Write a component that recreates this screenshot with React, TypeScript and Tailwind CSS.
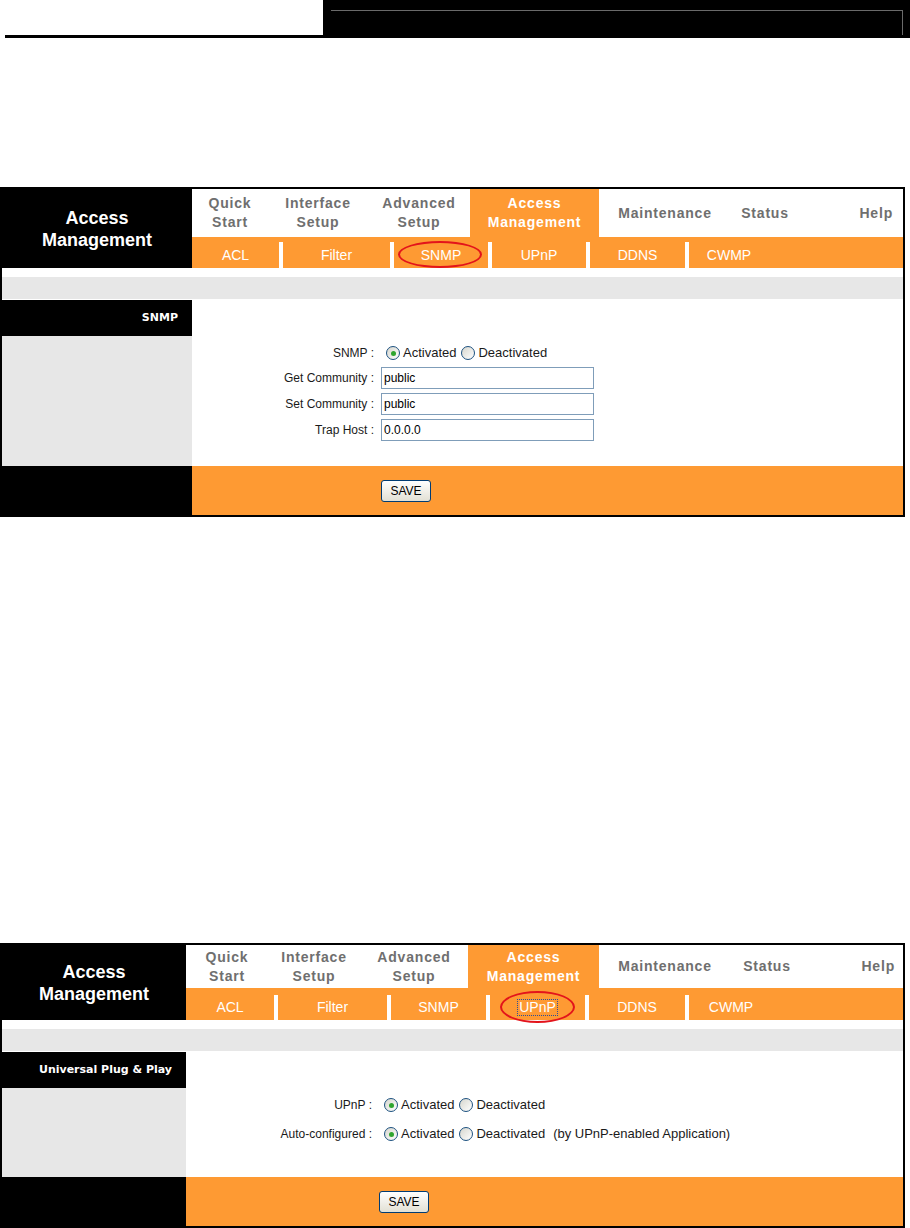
import type { ReactNode } from 'react'

interface NavCell {
  top: string
  bottom?: string
  w: string
  active?: boolean
}

interface SubCell {
  label: string
  w: string
  ring?: string
  focus?: boolean
}

interface PanelProps {
  leftW: string
  cols: string
  navH: string
  subH: string
  sepH: string
  bodyH: string
  helpPr: string
  title: string
  nav: NavCell[]
  sub: SubCell[]
  saveRow: string
  children: ReactNode
}

function Radio({ checked }: { checked?: boolean }) {
  return (
    <span className="ml-[5px] mr-[3px] inline-flex h-[14px] w-[14px] items-center justify-center rounded-full border border-[#1c5180] bg-linear-to-br from-[#d6d6ce] to-white">
      {checked && <span className="h-[5px] w-[5px] rounded-full bg-[#2fa52f]" />}
    </span>
  )
}

function SaveButton() {
  return (
    <button
      type="button"
      className="h-[22px] w-[50px] rounded-[3px] border border-[#003c74] bg-linear-to-b from-white to-[#e2e0d4] text-[12px] leading-none text-black"
    >
      SAVE
    </button>
  )
}

function Field({ value }: { value: string }) {
  return (
    <input
      readOnly
      value={value}
      className="h-[22px] w-[213px] border border-[#7f9db9] bg-white px-[2px] text-[12px] text-black outline-none"
    />
  )
}

function Panel(p: PanelProps) {
  return (
    <div className="w-[905px] border-2 border-black font-['Liberation_Sans',Arial,sans-serif]">
      {/* top: title + menus */}
      <div className="flex">
        <div className={`${p.leftW} flex items-center justify-center bg-black text-center text-[18px] font-bold leading-[22px] text-white`}>
          Access
          <br />
          Management
        </div>
        <div className="flex flex-1 flex-col">
          <div className={`flex ${p.navH}`}>
            {p.nav.map((n) => (
              <div
                key={n.top}
                className={`${n.w} flex items-center justify-center text-center text-[14px] font-bold leading-[19px] tracking-[0.8px] ${
                  n.active ? 'bg-[#fe9a33] text-white' : 'text-[#6f6f6f]'
                }`}
              >
                <span>
                  {n.top}
                  {n.bottom && <br />}
                  {n.bottom}
                </span>
              </div>
            ))}
            <div className={`flex flex-1 items-center justify-end ${p.helpPr} text-[14px] font-bold tracking-[0.8px] text-[#6f6f6f]`}>
              Help
            </div>
          </div>
          <div className={`flex items-end bg-[#fe9a33] ${p.subH}`}>
            {p.sub.map((s, i) => (
              <div key={s.label} className="flex items-end">
                {i > 0 && <div className={`w-[4px] ${p.sepH} bg-white`} />}
                <div className={`relative flex ${s.w} ${p.sepH} items-center justify-center text-[14px] text-white`}>
                  <span className={s.focus ? 'border border-dotted border-[#2d4f9a] px-px leading-[15px]' : ''}>
                    {s.label}
                  </span>
                  {s.ring && (
                    <span className={`pointer-events-none absolute rounded-[50%] border-2 border-[#e3141b] ${s.ring}`} />
                  )}
                </div>
              </div>
            ))}
          </div>
        </div>
      </div>

      <div className="h-[9px] bg-white" />
      <div className="h-[22px] bg-[#e7e7e7]" />

      {/* body */}
      <div className={`grid ${p.cols} border-t border-white`}>
        <div className={`flex flex-col ${p.bodyH}`}>
          <div className="flex h-[36px] items-center justify-end bg-black pr-[14px] font-['DejaVu_Sans',Verdana,sans-serif] text-[11px] font-bold text-white">
            {p.title}
          </div>
          <div className="flex-1 bg-[#e7e7e7]" />
        </div>
        <div className="flex flex-col bg-white pt-[42px] text-[12px] text-[#1a1a1a]">{p.children}</div>
      </div>

      <div className={`grid ${p.cols} h-[49px]`}>
        <div className="bg-black" />
        <div className={`flex items-center bg-[#fe9a33] ${p.saveRow}`}>
          <SaveButton />
        </div>
      </div>
    </div>
  )
}

function Row({ label, w, children }: { label: string; w: string; children: ReactNode }) {
  return (
    <div className="flex h-[22px] items-center">
      <div className={`${w} shrink-0 pr-[7px] text-right`}>{label} :</div>
      <div className="flex items-center whitespace-nowrap text-[13px]">{children}</div>
    </div>
  )
}

const nav1: NavCell[] = [
  { top: 'Quick', bottom: 'Start', w: 'w-[76px]' },
  { top: 'Interface', bottom: 'Setup', w: 'w-[100px]' },
  { top: 'Advanced', bottom: 'Setup', w: 'w-[102px]' },
  { top: 'Access', bottom: 'Management', w: 'w-[129px]', active: true },
  { top: 'Maintenance', w: 'w-[132px]' },
  { top: 'Status', w: 'w-[68px]' },
]

const nav2: NavCell[] = [
  { top: 'Quick', bottom: 'Start', w: 'w-[82px]' },
  { top: 'Interface', bottom: 'Setup', w: 'w-[92px]' },
  { top: 'Advanced', bottom: 'Setup', w: 'w-[108px]' },
  { top: 'Access', bottom: 'Management', w: 'w-[131px]', active: true },
  { top: 'Maintenance', w: 'w-[132px]' },
  { top: 'Status', w: 'w-[72px]' },
]

const sub1: SubCell[] = [
  { label: 'ACL', w: 'w-[87px]' },
  { label: 'Filter', w: 'w-[107px]' },
  { label: 'SNMP', w: 'w-[94px]', ring: 'left-[4px] top-[-1px] h-[27px] w-[84px]' },
  { label: 'UPnP', w: 'w-[94px]' },
  { label: 'DDNS', w: 'w-[95px]' },
  { label: 'CWMP', w: 'w-[80px]' },
]

const sub2: SubCell[] = [
  { label: 'ACL', w: 'w-[88px]' },
  { label: 'Filter', w: 'w-[109px]' },
  { label: 'SNMP', w: 'w-[95px]' },
  { label: 'UPnP', w: 'w-[95px]', ring: 'left-[10px] top-[-4px] h-[32px] w-[75px]', focus: true },
  { label: 'DDNS', w: 'w-[96px]' },
  { label: 'CWMP', w: 'w-[84px]' },
]

export default function App() {
  return (
    <div className="h-[1228px] w-[910px] overflow-hidden bg-white">
      {/* page header strip */}
      <div className="flex h-[38px]">
        <div className="w-[323px] pl-[5px]">
          <div className="h-[38px] border-b-[3px] border-black" />
        </div>
        <div className="flex-1 bg-black pl-[8px] pr-[7px] pt-[10px]">
          <div className="h-[25px] border-r border-t border-[#6a6a6a]" />
        </div>
      </div>

      <div className="mt-[149px]">
        <Panel
          leftW="w-[190px]"
          cols="grid-cols-[190px_1fr]"
          navH="h-[48px]"
          subH="h-[31px]"
          sepH="h-[26px]"
          bodyH="h-[166px]"
          helpPr="pr-[10px]"
          title="SNMP"
          nav={nav1}
          sub={sub1}
          saveRow="pl-[189px]"
        >
          <Row label="SNMP" w="w-[189px]">
            <Radio checked />
            Activated
            <Radio />
            Deactivated
          </Row>
          <div className="mt-[3px] flex flex-col gap-[4px]">
            <Row label="Get Community" w="w-[189px]">
              <Field value="public" />
            </Row>
            <Row label="Set Community" w="w-[189px]">
              <Field value="public" />
            </Row>
            <Row label="Trap Host" w="w-[189px]">
              <Field value="0.0.0.0" />
            </Row>
          </div>
        </Panel>
      </div>

      <div className="mt-[426px]">
        <Panel
          leftW="w-[184px]"
          cols="grid-cols-[184px_1fr]"
          navH="h-[43px]"
          subH="h-[32px]"
          sepH="h-[25px]"
          bodyH="h-[125px]"
          helpPr="pr-[8px]"
          title="Universal Plug & Play"
          nav={nav2}
          sub={sub2}
          saveRow="pl-[193px]"
        >
          <div className="flex flex-col gap-[7px]">
            <Row label="UPnP" w="w-[193px]">
              <Radio checked />
              Activated
              <Radio />
              Deactivated
            </Row>
            <Row label="Auto-configured" w="w-[193px]">
              <Radio checked />
              Activated
              <Radio />
              Deactivated
              <span className="ml-[8px]">(by UPnP-enabled Application)</span>
            </Row>
          </div>
        </Panel>
      </div>
    </div>
  )
}
